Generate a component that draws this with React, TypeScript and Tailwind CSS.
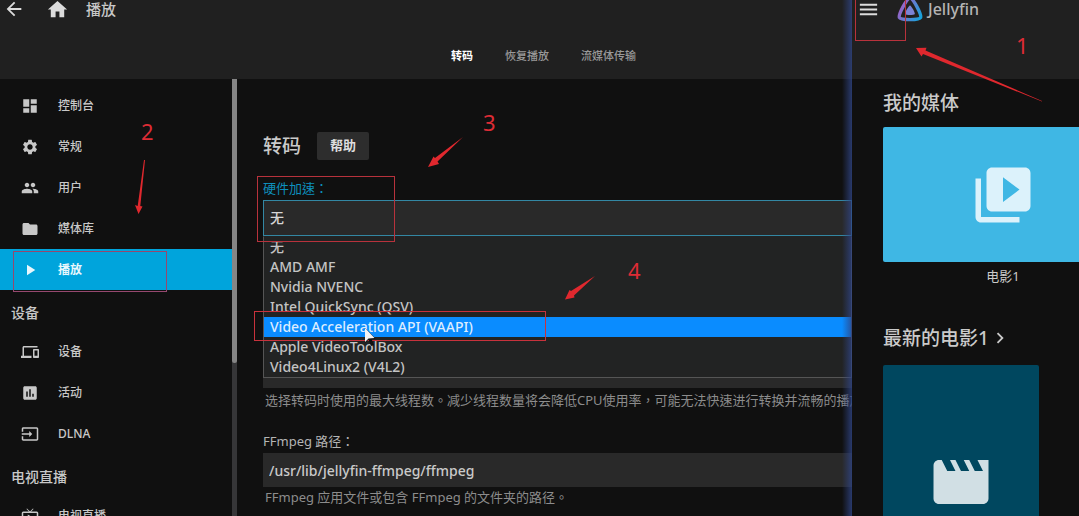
import { useState } from "react";
import type { ReactNode } from "react";
import type { IconType } from "react-icons";
import {
    MdArrowBack,
    MdAssessment,
    MdChevronRight,
    MdDashboard,
    MdDevices,
    MdFolder,
    MdHome,
    MdInput,
    MdLiveTv,
    MdMenu,
    MdMovie,
    MdPeople,
    MdPlayArrow,
    MdSettings,
    MdVideoLibrary,
} from "react-icons/md";

type NavItem = {
    label: string;
    icon: IconType;
    active?: boolean;
};

type NavSection = {
    title?: string;
    items: NavItem[];
};

const sections: NavSection[] = [
    {
        items: [
            { label: "控制台", icon: MdDashboard },
            { label: "常规", icon: MdSettings },
            { label: "用户", icon: MdPeople },
            { label: "媒体库", icon: MdFolder },
            { label: "播放", icon: MdPlayArrow, active: true },
        ],
    },
    {
        title: "设备",
        items: [
            { label: "设备", icon: MdDevices },
            { label: "活动", icon: MdAssessment },
            { label: "DLNA", icon: MdInput },
        ],
    },
    {
        title: "电视直播",
        items: [{ label: "电视直播", icon: MdLiveTv }],
    },
];

const tabs = ["转码", "恢复播放", "流媒体传输"];

const accelerations = [
    "无",
    "AMD AMF",
    "Nvidia NVENC",
    "Intel QuickSync (QSV)",
    "Video Acceleration API (VAAPI)",
    "Apple VideoToolBox",
    "Video4Linux2 (V4L2)",
];

function Sidebar() {
    return (
        <aside className="flex w-[237px] shrink-0 overflow-hidden">
            <nav className="min-w-0 flex-1 pt-1.5">
                {sections.map((section, index) => (
                    <div key={index}>
                        {section.title && (
                            <h3 className="flex h-[41px] items-center pt-1 pl-[11px] text-sm font-medium text-[#c8c8c8]">{section.title}</h3>
                        )}
                        {section.items.map(({ label, icon: Icon, active }) => (
                            <a
                                key={label}
                                href="#"
                                className={`flex h-[41px] items-center gap-[19px] pl-[21px] text-xs ${
                                    active ? "bg-[#00a4dc] font-bold text-[#e8f7fd]" : "font-medium text-[#c8c8c8]"
                                }`}
                            >
                                <Icon className="size-[18px]" />
                                {label}
                            </a>
                        ))}
                    </div>
                ))}
            </nav>
            <div className="w-[5px] bg-[#363638]">
                <div className="h-[65%] rounded-b bg-[#858585]" />
            </div>
        </aside>
    );
}

function AccelerationField() {
    const [value, setValue] = useState("无");

    return (
        <div className="relative">
            <label htmlFor="acceleration" className="block text-[13px] leading-6 text-[#0e8fbd]">
                硬件加速：
            </label>
            <select
                id="acceleration"
                value={value}
                onChange={(e) => setValue(e.target.value)}
                className="block h-9 w-full appearance-none border border-[#3387a3] bg-[#292929] px-1.5 text-sm font-medium text-[#d6d6d6]"
            >
                {accelerations.map((name) => (
                    <option key={name}>{name}</option>
                ))}
            </select>
            <ul
                role="listbox"
                aria-label="硬件加速"
                className="absolute inset-x-0 top-full z-10 border border-[#555] border-t-[#222323] bg-[#222323] text-sm leading-5 font-medium text-[#c4c4c4]"
            >
                {accelerations.map((name) => {
                    const hovered = name.includes("VAAPI");
                    return (
                        <li
                            key={name}
                            role="option"
                            aria-selected={hovered}
                            className={`h-5 px-1.5 ${hovered ? "bg-[#0a8cff] text-[#dcecff]" : ""}`}
                        >
                            {name}
                        </li>
                    );
                })}
            </ul>
        </div>
    );
}

function PlaybackSettings() {
    return (
        <main className="min-w-0 flex-1 overflow-hidden pt-[53px] pl-[26px]">
            <div className="mb-4 flex items-center gap-4">
                <h2 className="text-[19px] leading-7 font-medium text-[#cacaca]">转码</h2>
                <button className="h-7 rounded-xs bg-[#2d2d2d] px-[13px] text-[13px] font-bold text-[#dedede]">帮助</button>
            </div>
            <form>
                <AccelerationField />
                <div className="pt-[116px]">
                    <select aria-label="转码线程数" className="block h-9 w-full appearance-none bg-[#292929] px-[7px] text-sm text-[#d6d6d6]">
                        <option>自动</option>
                    </select>
                    <p className="pt-0.5 pl-0.5 text-[13px] leading-5 whitespace-nowrap text-[#8c8c8c]">
                        选择转码时使用的最大线程数。减少线程数量将会降低CPU使用率，可能无法快速进行转换并流畅的播放
                    </p>
                </div>
                <div className="pt-[19px]">
                    <label htmlFor="ffmpeg" className="block text-[13px] leading-6 text-[#b4b4b4]">
                        FFmpeg 路径：
                    </label>
                    <input
                        id="ffmpeg"
                        defaultValue="/usr/lib/jellyfin-ffmpeg/ffmpeg"
                        className="block h-[34px] w-full bg-[#292929] px-1.5 text-sm font-medium text-[#cacaca]"
                    />
                    <p className="pl-0.5 text-[13px] leading-5 whitespace-nowrap text-[#8c8c8c]">
                        FFmpeg 应用文件或包含 FFmpeg 的文件夹的路径。
                    </p>
                </div>
            </form>
        </main>
    );
}

function Dashboard() {
    return (
        <div className="relative flex min-w-0 flex-1 flex-col overflow-hidden">
            <header className="h-[79px] shrink-0 bg-[#202020] text-[#dcdcdc]">
                <div className="flex h-[18px] items-center pl-[3px]">
                    <button aria-label="返回">
                        <MdArrowBack className="size-[22px]" />
                    </button>
                    <a href="#" aria-label="主页" className="ml-[21px]">
                        <MdHome className="size-[23px]" />
                    </a>
                    <h1 className="ml-[17px] text-[15px] leading-[18px] font-medium text-[#c8c8c8]">播放</h1>
                </div>
                <nav className="flex gap-8 pt-7 pl-[451px] text-[11px] leading-5">
                    {tabs.map((tab, index) => (
                        <a key={tab} href="#" className={index === 0 ? "font-bold text-white" : "font-medium text-[#999]"}>
                            {tab}
                        </a>
                    ))}
                </nav>
            </header>
            <div className="flex min-h-0 flex-1">
                <Sidebar />
                <PlaybackSettings />
            </div>
            <div className="pointer-events-none absolute inset-y-0 right-0 z-20 w-2.5 bg-linear-to-r from-transparent to-[#2f4484]/80" />
        </div>
    );
}

function JellyfinLogo() {
    return (
        <svg viewBox="0 0 28 28" className="size-7" aria-hidden="true">
            <defs>
                <linearGradient id="jelly" x1="3" y1="10" x2="25" y2="22" gradientUnits="userSpaceOnUse">
                    <stop stopColor="#a75cc6" />
                    <stop offset="1" stopColor="#16a3dc" />
                </linearGradient>
            </defs>
            <path
                d="M14 3C11 3 2.2 19.5 3.4 22.5C4.6 25.3 23.4 25.3 24.6 22.5C25.8 19.5 17 3 14 3Z"
                fill="none"
                stroke="url(#jelly)"
                strokeWidth="3.4"
            />
            <path d="M14 10.5C12.7 10.5 8.6 17.8 9.2 19.1C9.8 20.4 18.2 20.4 18.8 19.1C19.4 17.8 15.3 10.5 14 10.5Z" fill="#7b83d6" />
        </svg>
    );
}

function MediaHome() {
    return (
        <section className="flex w-[227px] shrink-0 flex-col overflow-hidden bg-[#101010]">
            <header className="h-[79px] shrink-0 bg-[#202020]">
                <div className="flex h-[18px] items-center pl-[5px] text-[#dcdcdc]">
                    <button aria-label="菜单">
                        <MdMenu className="size-[23px]" />
                    </button>
                    <a href="#" className="ml-4 flex items-center gap-1 text-base leading-[18px] font-medium text-[#b4b4b4]">
                        <JellyfinLogo />
                        Jellyfin
                    </a>
                </div>
            </header>
            <div className="pt-2.5 pl-[31px] text-[#cacaca]">
                <h2 className="text-[19px] leading-7 font-medium">我的媒体</h2>
                <a href="#" className="mt-2.5 block w-60">
                    <div className="flex h-[135px] items-center justify-center rounded-xs bg-[#3fb7e4] text-[#dcf2fb]">
                        <MdVideoLibrary className="size-[66px]" />
                    </div>
                    <p className="pt-1 text-center text-[13px] leading-5">电影1</p>
                </a>
                <h2 className="mt-[38px] text-[19px] leading-7 font-medium">
                    <a href="#" className="flex items-center">
                        最新的电影1
                        <MdChevronRight className="size-[22px]" />
                    </a>
                </h2>
                <a href="#" aria-label="电影" className="mt-[13px] flex h-[234px] w-[156px] items-center justify-center rounded-xs bg-[#00475f] text-[#d1dfe4]">
                    <MdMovie className="size-[66px]" />
                </a>
            </div>
        </section>
    );
}

function Step({ className, children }: { className: string; children: ReactNode }) {
    return <span className={`absolute text-[22px] leading-6 text-[#dd2c35] ${className}`}>{children}</span>;
}

// Numbered walkthrough marks drawn over both windows
function Annotations() {
    return (
        <div className="pointer-events-none absolute inset-0 z-30 overflow-hidden">
            <div className="absolute -top-1 left-[855px] h-[45px] w-[51px] border border-[#b8323c]" />
            <div className="absolute top-[251px] left-[13px] h-[41px] w-[154px] border border-[#96486f]" />
            <div className="absolute top-[176px] left-[257px] h-[66px] w-[138px] border border-[#b8323c]" />
            <div className="absolute top-[311px] left-[254px] h-[30px] w-[292px] border border-[#c8323c]" />
            <svg className="absolute inset-0 size-full" fill="#e0282e" aria-hidden="true">
                <path d="M1042 101.500L923 54L921.500 56.500L916 48L926.500 47.800L925.500 50.500L1042 101Z" />
                <path d="M144 160L137.700 206L135 205L138.500 214L142.500 206.500L140.300 206L145 160Z" />
                <path d="M463 137L435 158L433.500 156.500L428 167L439 164L437.500 161.500Z" />
                <path d="M595 276L571 291L569.500 290L565 299.500L574.500 297.500L574 295.500Z" />
            </svg>
            <Step className="top-[33px] left-[1016px]">1</Step>
            <Step className="top-[119px] left-[141px]">2</Step>
            <Step className="top-[110px] left-[483px]">3</Step>
            <Step className="top-[258px] left-[628px]">4</Step>
            <svg viewBox="0 0 12 20" className="absolute top-[327px] left-[364px] h-5 w-3" aria-hidden="true">
                <path d="M1 1V16L4.500 12.500L7 19L10 18L7.500 12L11.500 11.500Z" fill="#111" />
                <path d="M1 1V15L4.500 11.500L10.500 11Z" fill="#f4f4f4" />
            </svg>
        </div>
    );
}

export default function App() {
    return (
        <div className="relative flex h-screen overflow-hidden bg-[#101010] font-['Noto_Sans','Noto_Sans_CJK_TC',sans-serif]">
            <Dashboard />
            <MediaHome />
            <Annotations />
        </div>
    );
}
